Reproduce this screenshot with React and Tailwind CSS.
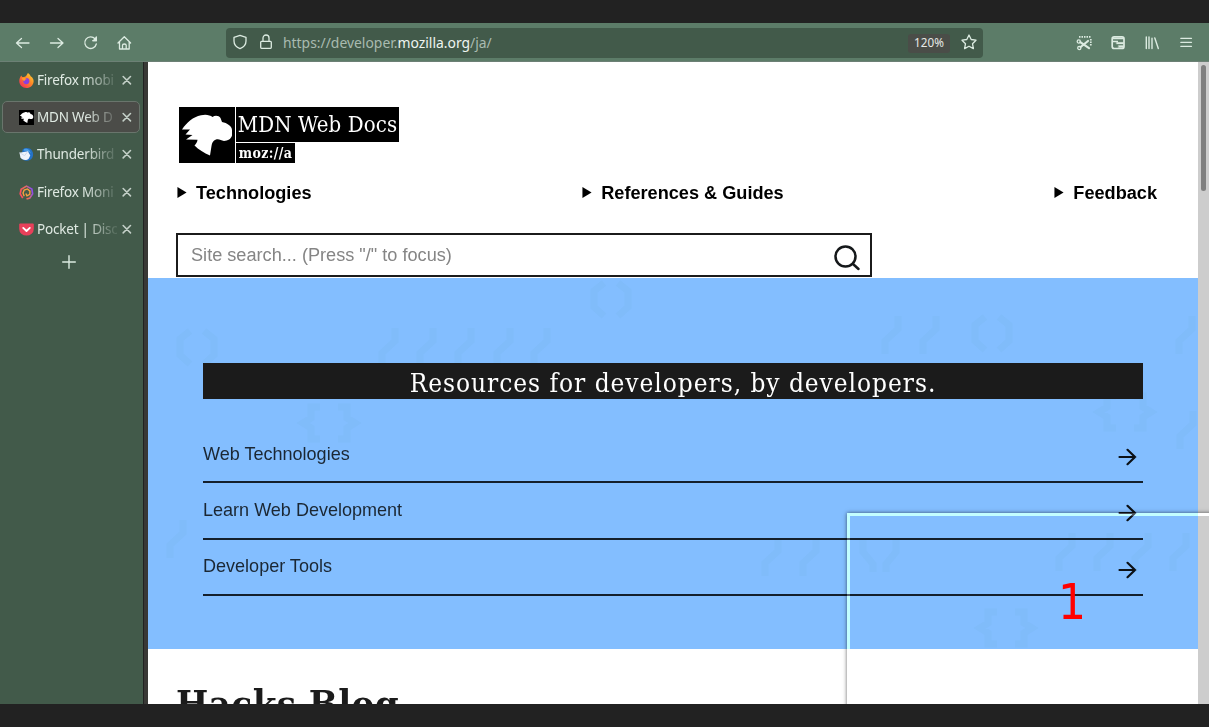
import React from "react";

const zilla = "font-['DejaVu_Serif_Condensed','DejaVu_Serif',serif]";

const tabs = [
  { title: "Firefox mobi", icon: "firefox" },
  { title: "MDN Web D", icon: "mdn", active: true },
  { title: "Thunderbird", icon: "thunderbird" },
  { title: "Firefox Moni", icon: "monitor" },
  { title: "Pocket | Disc", icon: "pocket" },
];

const Dino = ({ className }) => (
  <svg viewBox="0 0 56 56" className={className} fill="#fff">
    <path d="M3 22.500 C8 15 14 10 22 8.200 C27 7 31 8 33.500 10 C36 8 40 8.500 41.500 11 L43 15 C48 16 53 19 53 23 V28.500 C52 32 49 33.500 45 34 C42 33.500 40 31.500 37 32.500 C34 33.500 33 36 32.500 39 L31 48.500 C25 46 19.500 42.500 15.500 38.500 C17 37 18.500 35 18.500 32.800 L7 32.500 L13.500 28 L6.500 27.500 L11 22.500 Z" />
  </svg>
);

function Favicon({ kind }) {
  if (kind === "mdn")
    return <span className="block size-[15px] bg-black"><Dino className="size-[15px]" /></span>;
  if (kind === "firefox")
    return (
      <svg viewBox="0 0 16 16" className="size-[15px]">
        <defs>
          <linearGradient id="fx" x1="1" y1="0" x2="0.1" y2="1">
            <stop offset="0" stopColor="#ffe23c" />
            <stop offset="0.45" stopColor="#ff8a25" />
            <stop offset="1" stopColor="#f4245f" />
          </linearGradient>
        </defs>
        <path d="M9.500 0 C11 1 12 2.200 12.600 3.600 C13.300 3.600 15.800 6 15.600 9 C15.400 13 12 16 8 16 C3.600 16 .3 12.700 .3 8.600 C.3 6 1.200 4.200 2.400 2.600 L3.400 4.300 L5 4.300 C7 4.300 8.300 2.500 9.500 0Z" fill="url(#fx)" />
        <circle cx="7.800" cy="8.600" r="3.300" fill="#8a3fe0" />
        <path d="M3 5.300 C5.500 4.600 7.300 5.200 8.300 6.600 C6.500 6.600 6 7.600 6 8.600 C4.300 8.500 3.500 7 3 5.300Z" fill="#ff9a2a" />
      </svg>
    );
  if (kind === "thunderbird")
    return (
      <svg viewBox="0 0 16 16" className="size-[15px]">
        <path d="M4 2.500 C7 .2 11.500 .6 13.700 3.600 C16 6.800 15.300 11.500 12 13.700 C9 15.500 4 15 2 11.500Z" fill="#2472c8" />
        <path d="M5.500 2 C9 1 12.500 3.500 12.500 7 C11 4.500 8 3.600 5 4Z" fill="#4ba0e8" />
        <path d="M.5 6 L9.500 4.500 L12 9 L10.500 12.200 C8 14.800 3.500 14.300 1.500 11Z" fill="#eef3fb" />
        <path d="M.5 6 L6 9.200 L9.500 4.500" fill="none" stroke="#c4d2e6" strokeWidth=".8" />
      </svg>
    );
  if (kind === "monitor")
    return (
      <svg viewBox="0 0 16 16" className="size-[15px]" fill="none" strokeWidth="1.800">
        <defs>
          <linearGradient id="mon" x1="0" y1="0.7" x2="1" y2="0.4">
            <stop offset="0" stopColor="#ff4a5f" />
            <stop offset="0.55" stopColor="#e8705a" />
            <stop offset="1" stopColor="#8a4af0" />
          </linearGradient>
        </defs>
        <path d="M4 14 L1.300 9.500 L2.300 4.500 L8 1.200 L13.700 4.300 L14.500 9.500 L11.500 13.800 L8 15" stroke="url(#mon)" />
        <path d="M5.500 12 L4.300 8.500 L5.500 5.300 L9 4.200 L11.700 6.500 L11.500 10 L8.500 11.500 L7.300 9" stroke="#f9a03f" strokeWidth="1.500" />
      </svg>
    );
  return (
    <svg viewBox="0 0 16 16" className="size-[15px]">
      <path d="M1.200 1.500 H14.800 Q15.800 1.500 15.800 2.500 V7.500 A7.800 7 0 0 1 .2 7.500 V2.500 Q.2 1.500 1.200 1.500Z" fill="#e8405a" />
      <path d="M4.500 6.300 L8 9.600 L11.500 6.300" fill="none" stroke="#fff" strokeWidth="2" strokeLinecap="round" strokeLinejoin="round" />
    </svg>
  );
}

const Ico = ({ children, className = "size-4" }) => (
  <svg viewBox="0 0 16 16" className={`shrink-0 ${className}`} fill="none" stroke="#dcebe1" strokeWidth="1.300" strokeLinecap="round" strokeLinejoin="round">
    {children}
  </svg>
);

function Toolbar() {
  return (
    <header className="flex h-[39px] shrink-0 items-center border-b border-[#6c8075] bg-[#5c7c68] pl-[15px] pr-[15px] pt-px">
      <div className="flex gap-[18px]">
        <Ico><path d="M14 8 H1.500 M6.500 3.500 L1.500 8 L6.500 12.500" /></Ico>
        <Ico><path d="M1.500 8 H14 M9 3.500 L14 8 L9 12.500" /></Ico>
        <Ico><path d="M12 3.800 A5.800 5.800 0 1 0 13.300 9 M13.300 2 V5.700 H9.800" /><path d="M13.300 2.500 V5.700 H10.300Z" fill="#dcebe1" /></Ico>
        <Ico><path d="M1 8 L7.300 1.700 L13.600 8 M2.500 7 V14 H12.200 V7 M5.500 13.800 V10.300 Q5.500 9 7.300 9 Q9.200 9 9.200 10.300 V13.800" /></Ico>
      </div>
      <div className="ml-[93px] flex h-[30px] w-[757px] items-center rounded bg-[#425a4a] pl-1.5 pr-1.5">
        <Ico className="-mt-px size-4"><path d="M8 1.300 L14 3.300 V7 C14 10.500 11.500 13.300 8 14.700 C4.500 13.300 2 10.500 2 7 V3.300Z" /></Ico>
        <Ico className="-mt-px ml-2.5 size-4"><path d="M3.500 7.300 H12.500 Q13.300 7.300 13.300 8.300 V13.300 Q13.300 14.300 12.500 14.300 H3.500 Q2.700 14.300 2.700 13.300 V8.300 Q2.700 7.300 3.500 7.300Z M5 7 V4 A3 3 0 0 1 11 4 V7" /></Ico>
        <span className="ml-[9px] whitespace-nowrap font-['Noto_Sans',sans-serif] text-[13.900px] leading-5 text-[#a9bbb0]">
          https://developer.<span className="text-[#eef5f0]">mozilla.org</span>/ja/
        </span>
        <span className="ml-auto mt-px flex h-[19px] w-[42px] items-center justify-center rounded-[3px] bg-[#4a4d48] font-['Noto_Sans',sans-serif] text-[11.700px] text-[#e6e9e6]">120%</span>
        <Ico className="-mt-px ml-[11px] size-4"><path d="M8 1 L10.200 5.500 L15 6.200 L11.500 9.700 L12.400 14.600 L8 12.200 L3.600 14.600 L4.500 9.700 L1 6.200 L5.800 5.500Z" /></Ico>
      </div>
      <div className="ml-auto flex gap-[18px]">
        <Ico>
          <path d="M3 1.800 H15.300 M14.800 4 V11" strokeDasharray="1.500 1" strokeWidth="1.700" strokeLinecap="butt" />
          <circle cx="2.800" cy="6.500" r="1.600" /><circle cx="3.300" cy="13" r="1.600" />
          <path d="M4.300 7.200 L13 13.200 M4.600 12 L12 6" strokeWidth="2.200" />
        </Ico>
        <Ico>
          <rect x="2.200" y="1.800" width="11.800" height="11.700" rx="2" strokeWidth="1.700" />
          <path d="M2 3.500 H14 M2.500 6.500 H8" strokeWidth="1.500" strokeLinecap="butt" />
          <path d="M6.500 7.300 H13.500 V9 H6.500Z M8.500 10.500 H13.500 V12.500 H8.500Z" fill="#dcebe1" strokeWidth=".3" />
        </Ico>
        <Ico><path d="M2.300 2 V13.500 M5 2 V13.500 M8 3.300 V13.500 M10.800 3 L14.300 13.500" strokeWidth="1.400" /></Ico>
        <Ico><path d="M2.800 3.300 H13.500 M2.800 7.300 H13.500 M2.800 11.300 H13.500" /></Ico>
      </div>
    </header>
  );
}

function Sidebar() {
  return (
    <aside className="w-[143px] shrink-0 bg-[#425a4a] pl-0.5 pr-[3px] pt-0.5">
      {tabs.map((t) => (
        <div
          key={t.title}
          className={`mb-[5.200px] flex h-8 items-center rounded-[5px] border pl-4 ${t.active ? "border-[#69756c] bg-[#4b4c48]" : "border-transparent"}`}
        >
          <span className="mt-px flex size-[15px] shrink-0 items-center"><Favicon kind={t.icon} /></span>
          <span className="ml-[3px] w-[80px] whitespace-nowrap font-['Noto_Sans',sans-serif] text-[13.500px] leading-5 tracking-[-0.200px] text-[#dfe9e2] [mask-image:linear-gradient(to_right,black_60%,rgba(0,0,0,0.15)_97%)]">
            {t.title}
          </span>
          <Ico className="ml-[3px] size-[14px]"><path d="M3.600 4 L12 12.400 M12 4 L3.600 12.400" stroke="#c3cfc7" strokeWidth="1.800" /></Ico>
        </div>
      ))}
      <div className="flex justify-center pr-[4px]">
        <Ico className="mt-1 size-4"><path d="M8 1.700 V14.300 M1.700 8 H14.300" strokeWidth="1.400" /></Ico>
      </div>
    </aside>
  );
}

const slash = (x, y) => `M${x + 17} ${y} v13 l-13 12 v13`;
const paren = (x, y) => `M${x + 17} ${y + 3} l-10 8 v16 l10 9 M${x + 31} ${y + 3} l10 8 v16 l-10 9`;
const curly = (x, y) => `M${x + 20} ${y + 3} h-9 v11 l-8 5 l8 5 v11 h9 M${x + 38} ${y + 3} h9 v11 l8 5 l-8 5 v11 h-9`;

// Coordinates are relative to the top-left corner of the hero.
const glyphs = [
  paren(439, 2), paren(25, 50),
  slash(230, 50), slash(268, 50), slash(306, 50), slash(345, 50), slash(382, 50),
  slash(733, 38), slash(771, 38), paren(820, 36), slash(1027, 38),
  curly(152, 126), curly(948, 115), slash(1028, 133),
  slash(18, 242), slash(613, 260), slash(651, 260),
  "M715 262 v12 l10 12 v8 M748 262 v12 l-10 12 v8",
  slash(907, 255), slash(945, 255), slash(983, 255), slash(1021, 255),
  curly(829, 331),
].join(" ");

function Hero() {
  return (
    <section className="relative h-[371px] bg-[#83beff] px-[55px] pt-[85px]">
      <svg className="absolute inset-0" width="1050" height="371" fill="none" stroke="#80bcfa" strokeWidth="7">
        <path d={glyphs} />
      </svg>
      <h1 className={`relative flex h-9 items-center justify-center whitespace-nowrap bg-[#1b1b1b] pt-[4px] text-[26px] tracking-[0.960px] text-white ${zilla}`}>
        Resources for developers, by developers.
      </h1>
      <ul className="relative mt-[28px]">
        {["Web Technologies", "Learn Web Development", "Developer Tools"].map((t) => (
          <li key={t} className="flex h-[56.300px] items-center justify-between border-b-2 border-[#14202c] pr-[6px] text-[18.050px] text-[#1b2733]">
            <span>{t}</span>
            <svg viewBox="0 0 20 20" className="mt-[6px] size-5" fill="none" stroke="#0c1116" strokeWidth="2.200" strokeLinecap="round">
              <path d="M2.500 10 H18 M10.500 2.800 L18 10 L10.500 17.200" />
            </svg>
          </li>
        ))}
      </ul>
    </section>
  );
}

const NavItem = ({ children }) => (
  <span className="flex items-center gap-[9px]">
    <svg viewBox="0 0 10 12" className="-mt-[3px] h-[11px] w-2.5"><path d="M0 0 L10 6 L0 12Z" /></svg>
    {children}
  </span>
);

function Page() {
  return (
    <main className="h-full w-[1050px] shrink-0 overflow-hidden bg-white font-['Liberation_Sans',sans-serif]">
      <div className="h-[216px] pt-[45px]">
        <div className="ml-[31px] flex gap-px">
          <div className="size-14 bg-black"><Dino className="size-14" /></div>
          <div className={`flex flex-col items-start gap-px text-white ${zilla}`}>
            <span className="flex h-[35px] w-[163px] items-center justify-center whitespace-nowrap bg-black text-[22px] tracking-[0.120px]">MDN Web Docs</span>
            <span className="flex h-5 w-[59px] items-center justify-center bg-black text-[14px] font-bold tracking-[0.350px]">moz://a</span>
          </div>
        </div>
        <nav className="mt-[19px] flex h-6 items-center justify-between pl-[29px] pr-[41px] text-[18.150px] font-bold text-black">
          <NavItem>Technologies</NavItem>
          <NavItem>References &amp; Guides</NavItem>
          <NavItem>Feedback</NavItem>
        </nav>
        <div className="ml-[28px] mt-[27px] flex h-[44px] w-[696px] items-center justify-between border-2 border-[#1b1b1b] pl-[13px] pr-[9px] text-[18.150px] text-[#858585]">
          <span className="pt-0.5">Site search... (Press "/" to focus)</span>
          <svg viewBox="0 0 28 28" className="mt-[5px] size-7" fill="none" stroke="#15181a" strokeWidth="2.500" strokeLinecap="round">
            <circle cx="12.500" cy="12.500" r="10" /><path d="M20 20 L25.500 25" />
          </svg>
        </div>
      </div>
      <Hero />
      <h2 className={`ml-[28px] mt-[31px] whitespace-nowrap text-[38px] font-bold leading-[48px] tracking-[0.450px] text-[#1b1b1b] ${zilla}`}>Hacks Blog</h2>
    </main>
  );
}

export default function App() {
  return (
    <div className="relative flex h-[727px] w-[1209px] flex-col overflow-hidden bg-[#222222] py-[23px]">
      <Toolbar />
      <div className="relative isolate flex h-[642px] overflow-hidden">
        <Sidebar />
        <div className="w-[5px] shrink-0 border-l border-[#222] bg-[#393936]" />
        <Page />
        <div className="flex w-[11px] shrink-0 justify-center bg-[#cdcdcd] pt-[3px]">
          <div className="h-[126px] w-[5px] rounded-full bg-[#7f7f7f]" />
        </div>
        <div className="absolute left-[847px] top-[451px] h-[220px] w-[380px] shadow-[0_0_4px_rgba(0,0,0,0.6)]" />
        <div className="absolute left-[847px] top-[451px] h-[220px] w-[380px] border-[3px] border-[#404040] mix-blend-plus-lighter" />
        <span className="absolute left-[1058px] top-[509px] font-['DejaVu_Sans_Condensed','DejaVu_Sans',sans-serif] text-[49px] leading-[64px] text-[#ff0000]">1</span>
      </div>
    </div>
  );
}
